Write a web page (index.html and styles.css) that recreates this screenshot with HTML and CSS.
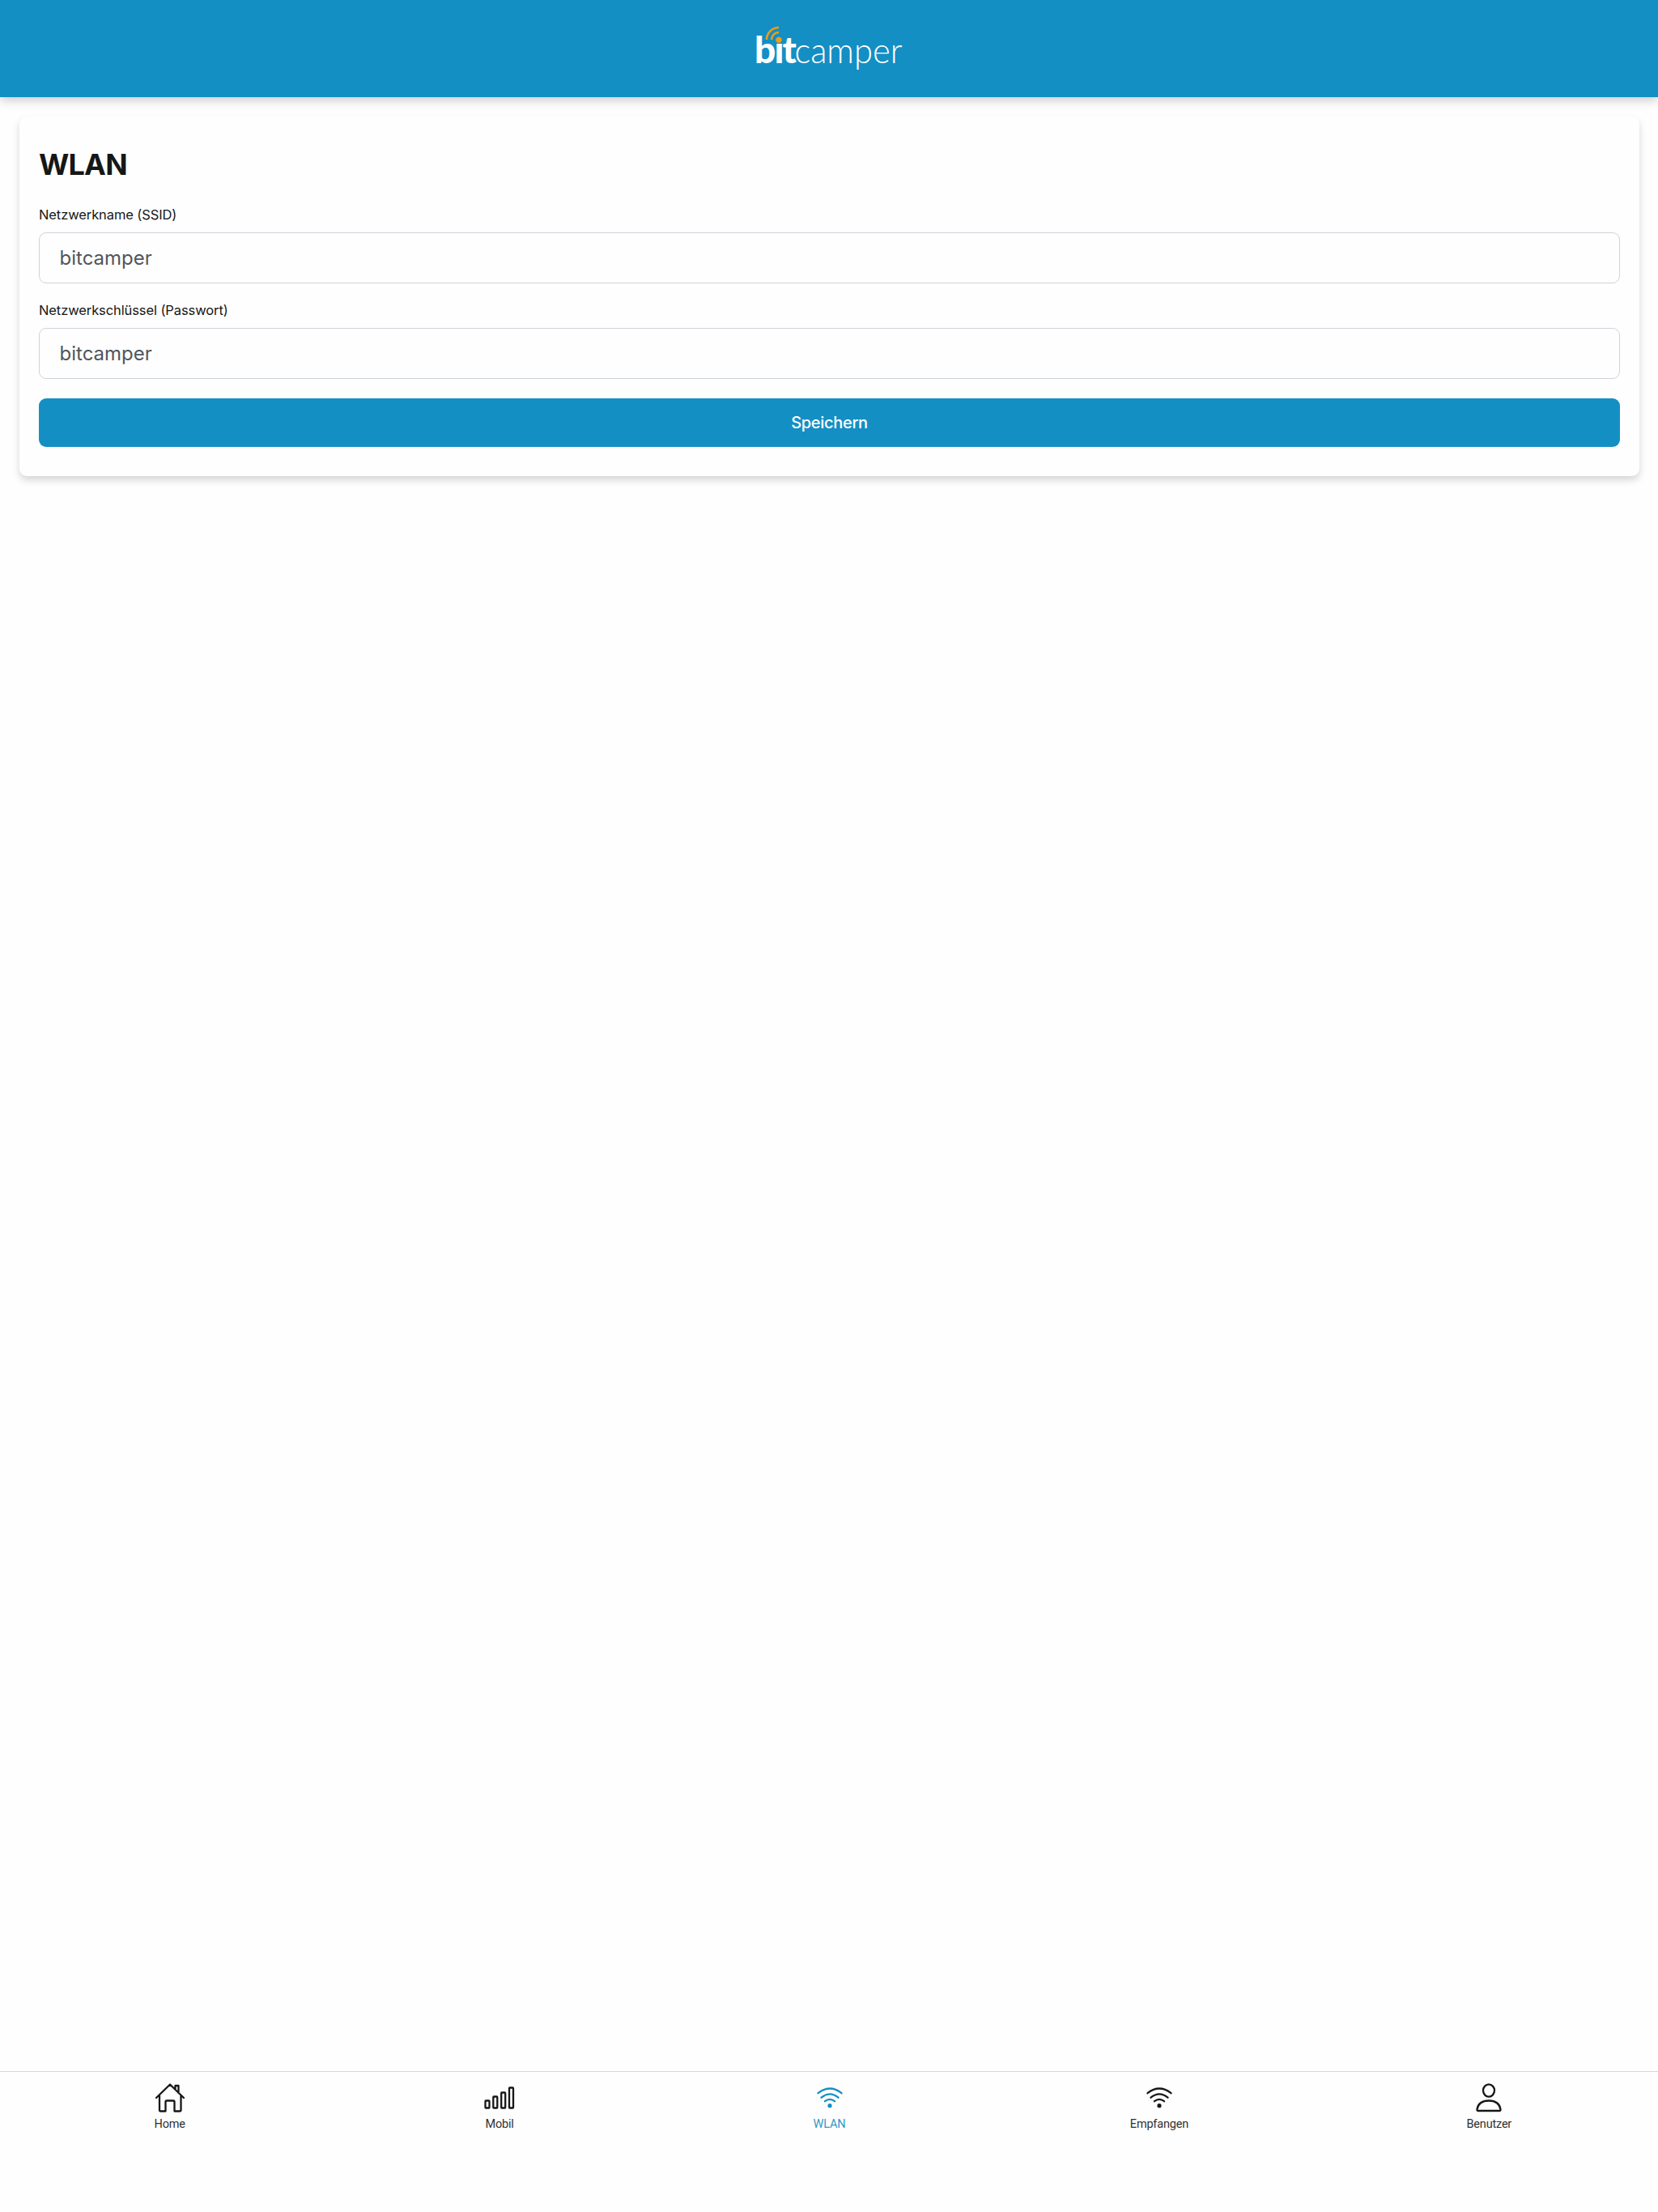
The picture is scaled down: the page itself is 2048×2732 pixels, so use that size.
FILE: index.html
```html
<!DOCTYPE html>
<html lang="de">
<head>
    <meta charset="UTF-8">
    <meta name="viewport" content="width=device-width, initial-scale=1.0">
    <title>bitcamper</title>
    <link rel="stylesheet" href="styles.css">
</head>
<body>
    <header class="header">
        <svg class="logo" viewBox="0 0 180 54" role="img" aria-label="bitcamper">
            <!-- Cuts off the dot of the i, the orange one takes its place -->
            <clipPath id="stem">
                <path d="M-4 0h25.500v60H-4zM21.500 20.500h11.500v30H21.500zM33 0h20v60H33z"/>
            </clipPath>
            <text class="logo-bold" clip-path="url(#stem)" x="-2 22.500 32.500" y="44.500">bit</text>
            <text class="logo-thin" x="47.500" y="44.500" textLength="133" lengthAdjust="spacingAndGlyphs">camper</text>
            <circle class="logo-dot" cx="28" cy="16.3" r="3.6"/>
            <path class="logo-wave" d="M19 16a9 9 0 0 1 9-9M13 16A15 15 0 0 1 28 1"/>
        </svg>
    </header>

    <!-- WLAN settings -->
    <main class="content">
        <form class="card">
            <h1>WLAN</h1>
            <label for="ssid">Netzwerkname (SSID)</label>
            <input type="text" id="ssid" value="bitcamper">
            <label for="password">Netzwerkschlüssel (Passwort)</label>
            <input type="text" id="password" value="bitcamper">
            <button type="button" class="button">Speichern</button>
        </form>
    </main>

    <!-- Bottom navigation -->
    <nav class="tabs">
        <a href="#" class="tab">
            <svg class="icon" viewBox="0 0 40 40">
                <path d="M3 20 20 3.500 37 20M26.500 10V5h4v9M7 17v18.500q0 1 1 1h6.500V25q0-1.500 1.500-1.500h8q1.500 0 1.500 1.500v11.500h6.500q1.500 0 1.500-1.500V17"/>
            </svg>
            <span>Home</span>
        </a>
        <a href="#" class="tab">
            <svg class="icon" viewBox="0 0 40 40">
                <rect x="2.500" y="23.500" width="5" height="9" rx=".7"/>
                <rect x="12.300" y="18.500" width="5" height="14" rx=".7"/>
                <rect x="22.200" y="13.500" width="5" height="19" rx=".7"/>
                <rect x="32" y="7.500" width="5" height="25" rx=".7"/>
            </svg>
            <span>Mobil</span>
        </a>
        <a href="#" class="tab active">
            <svg class="icon" viewBox="0 0 40 40">
                <path d="M5.500 14.200q14.500-11.400 29 0M9.500 19.700q10.500-8.600 21 0M14 24.200q6-4.600 12 0"/>
                <circle class="fill" cx="20" cy="29.700" r="2.600"/>
            </svg>
            <span>WLAN</span>
        </a>
        <a href="#" class="tab">
            <svg class="icon" viewBox="0 0 40 40">
                <path d="M5.500 14.200q14.500-11.400 29 0M9.500 19.700q10.500-8.600 21 0M14 24.200q6-4.600 12 0"/>
                <circle class="fill" cx="20" cy="29.700" r="2.600"/>
            </svg>
            <span>Empfangen</span>
        </a>
        <a href="#" class="tab">
            <svg class="icon" viewBox="0 0 40 40">
                <ellipse cx="20" cy="11" rx="7" ry="7.600"/>
                <path d="M7 36q-1.800 0-1.500-1.800C6.700 27 12.500 23.500 20 23.500S33.300 27 34.500 34.200Q34.800 36 33 36z"/>
            </svg>
            <span>Benutzer</span>
        </a>
    </nav>
</body>
</html>
```
FILE: styles.css
```css
* {
    box-sizing: border-box;
}

body {
    margin: 0;
    height: 100vh;
    display: flex;
    flex-direction: column;
    font-family: Inter, sans-serif;
    font-size: 24px;
    color: #151716;
    background: #fefefe;
    overflow: hidden;
}

.header {
    height: 120px;
    flex: none;
    display: flex;
    justify-content: center;
    align-items: center;
    background: #148fc4;
    box-shadow: 0 4px 12px rgba(0, 0, 0, 0.2);
}

.logo {
    width: 180px;
    height: 54px;
    overflow: visible;
}

.logo-bold {
    font: 900 46px Lato, sans-serif;
    fill: #fff;
}

.logo-thin {
    font: 300 43px Lato, sans-serif;
    fill: #fff;
}

.logo-dot {
    fill: #f39c12;
}

.logo-wave {
    fill: none;
    stroke: #f39c12;
    stroke-width: 2.5;
}

.content {
    flex: 1;
    padding: 24px 23px 24px 24px;
}

.card {
    display: flex;
    flex-direction: column;
    height: 444px;
    padding: 36px 24px;
    background: #fefefe;
    border-radius: 9px;
    box-shadow: 0 5px 10px rgba(0, 0, 0, 0.16);
}

h1 {
    margin: 0 0 25px;
    font-size: 36px;
    font-weight: 700;
    line-height: 46px;
    letter-spacing: -0.8px;
}

label {
    margin-bottom: 8px;
    font-size: 16.5px;
    font-weight: 400;
    line-height: 28px;
    letter-spacing: -0.1px;
}

input {
    height: 63px;
    margin: 0 0 19px;
    padding: 0 24px 0 24.5px;
    border: 1px solid #ced4da;
    border-radius: 9px;
    background: #fefefe;
    color: #50565e;
    font: 24px Inter, sans-serif;
}

.button {
    height: 60px;
    margin-top: 5px;
    border: none;
    border-radius: 9px;
    background: #148fc4;
    color: #fff;
    font: 500 20px Inter, sans-serif;
    letter-spacing: -0.3px;
}

.tabs {
    height: 174px;
    flex: none;
    display: flex;
    justify-content: center;
    padding: 12px 5px 0 6px;
    border-top: 1px solid #d8d8d8;
    background: #fefefe;
}

.tab {
    flex: 1;
    display: flex;
    flex-direction: column;
    align-items: center;
    color: #151716;
    font: 14.5px/20px Roboto, sans-serif;
    letter-spacing: -0.2px;
    text-decoration: none;
}

.tab span {
    opacity: 0.9;
}

.tab.active {
    color: #148fc4;
}

.icon {
    width: 40px;
    height: 40px;
    margin-bottom: 3px;
    fill: none;
    stroke: currentColor;
    stroke-width: 2.3;
    stroke-linecap: round;
    stroke-linejoin: round;
}

.icon .fill {
    fill: currentColor;
    stroke: none;
}
```
